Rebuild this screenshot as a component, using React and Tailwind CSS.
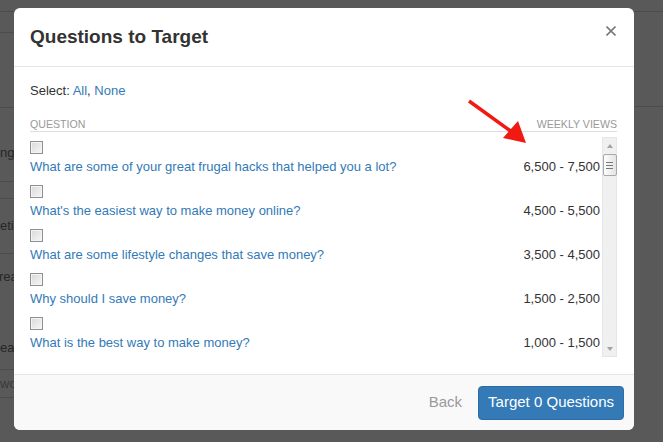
import React from "react";

const questions = [
  { text: "What are some of your great frugal hacks that helped you a lot?", views: "6,500 - 7,500" },
  { text: "What's the easiest way to make money online?", views: "4,500 - 5,500" },
  { text: "What are some lifestyle changes that save money?", views: "3,500 - 4,500" },
  { text: "Why should I save money?", views: "1,500 - 2,500" },
  { text: "What is the best way to make money?", views: "1,000 - 1,500" },
];

// the dimmed page behind the modal, only its left edge shows
const BackdropPage = () => (
  <div className="flex flex-col w-full h-full text-[13px] text-[#262626]">
    <div className="h-[12px] border-b border-[#4c4c4c] shrink-0" />
    <div className="flex flex-1">
      <div className="w-[40px] flex flex-col">
        <div className="h-[21px] border-b border-[#4c4c4c]" />
        <div className="h-[75px] border-b border-[#4c4c4c]" />
        <div className="h-[74px] border-b border-[#4c4c4c] flex items-end pb-[18px]">
          <span className="whitespace-nowrap leading-[20px]">ng</span>
        </div>
        <div className="h-[17px] border-b border-[#4c4c4c]" />
        <div className="h-[55px] border-b border-[#4c4c4c] flex items-center">
          <span className="whitespace-nowrap leading-[20px]">etin</span>
        </div>
        <div className="h-[116px] border-b border-[#4c4c4c] flex flex-col pt-[13px]">
          <span className="whitespace-nowrap leading-[20px] -ml-[1px]">rea</span>
          <span className="whitespace-nowrap leading-[20px] mt-[51px]">ear</span>
        </div>
        <div className="h-[28px] border-b border-[#4c4c4c] flex items-center">
          <span className="whitespace-nowrap leading-[20px] text-[#3a3a3a]">wor</span>
        </div>
      </div>
      <div className="flex-1" />
      <div className="w-[29px] flex flex-col">
        <div className="h-[95px] border-b border-[#4c4c4c]" />
      </div>
    </div>
  </div>
);

const Checkbox = () => (
  <div className="w-[13px] h-[13px] border border-[#8f8f8f] bg-gradient-to-br from-[#d9d9d9] to-[#f6f6f6] shadow-[inset_0_0_0_1px_#f4f4f4]" />
);

const FakeScrollbar = () => (
  <div className="w-[15px] h-full bg-[#f0f0f0] border border-[#e6e6e6] flex flex-col items-center">
    <div className="h-[16px] flex items-center justify-center">
      <div className="w-0 h-0 border-l-[3.5px] border-r-[3.5px] border-b-[4px] border-l-transparent border-r-transparent border-b-[#a3a3a3]" />
    </div>
    <div className="w-[14px] h-[22px] border border-[#a9a9a9] rounded-[2px] bg-gradient-to-r from-[#fdfdfd] to-[#e4e4e4] flex flex-col items-center justify-center gap-[2px]">
      <div className="w-[7px] h-px bg-[#777]" />
      <div className="w-[7px] h-px bg-[#777]" />
      <div className="w-[7px] h-px bg-[#777]" />
    </div>
    <div className="flex-1" />
    <div className="h-[14px] flex items-center justify-center">
      <div className="w-0 h-0 border-l-[3.5px] border-r-[3.5px] border-t-[4px] border-l-transparent border-r-transparent border-t-[#a3a3a3]" />
    </div>
  </div>
);

export default function App() {
  return (
    <div className="relative w-[663px] h-[442px] overflow-hidden bg-[#595959] font-['Liberation_Sans',Arial,sans-serif]">
      <BackdropPage />

      {/* Modal */}
      <div className="absolute left-[14px] top-[8px] w-[620px] h-[422px] bg-white rounded-[6px] flex flex-col overflow-hidden">
        {/* Header */}
        <div className="flex items-start justify-between pl-4 pr-[18px] pt-[15px] pb-[15px] border-b border-[#e5e5e5]">
          <h4 className="text-[19px] leading-[28px] font-bold text-[#333]">Questions to Target</h4>
          <button className="mt-[3px] w-[10px] h-[10px] flex items-center justify-center">
            <svg width="10" height="10" viewBox="0 0 10 10">
              <path d="M0.5 0.5 L9.5 9.5 M9.5 0.5 L0.5 9.5" stroke="#7a7a7a" strokeWidth="1.6" />
            </svg>
          </button>
        </div>

        {/* Body */}
        <div className="flex-1 pl-4 pr-[17px] pt-[15px] pb-[17px] flex flex-col">
          <div className="text-[13px] leading-[18px] text-[#333]">
            Select: <a className="text-[#337ab7]">All</a>, <a className="text-[#337ab7]">None</a>
          </div>

          <div className="mt-[17px] flex justify-between text-[10.6px] leading-[14px] text-[#999] border-b border-[#dddddd]">
            <span>QUESTION</span>
            <span>WEEKLY VIEWS</span>
          </div>

          <div className="mt-[5px] h-[220px] flex">
            <div className="flex-1 pr-[2px] overflow-hidden">
              {questions.map((q) => (
                <div key={q.text} className="pt-[4px] pb-[4px]">
                  <Checkbox />
                  <div className="mt-[3px] flex justify-between text-[13px] leading-[20px]">
                    <a className="text-[#337ab7]">{q.text}</a>
                    <span className="text-[#333]">{q.views}</span>
                  </div>
                </div>
              ))}
            </div>
            <FakeScrollbar />
          </div>
        </div>

        {/* Footer */}
        <div className="h-[56px] border-t border-[#e5e5e5] bg-[#f9f9f9] flex items-center justify-end pr-[10px]">
          <button className="text-[15px] text-[#999] mr-[16px]">Back</button>
          <button className="h-[34px] px-[9px] rounded-[4px] bg-[#337ab7] border border-[#2e6da4] text-white text-[15px]">
            Target 0 Questions
          </button>
        </div>
      </div>

      {/* annotation arrow */}
      <svg className="absolute left-0 top-0 pointer-events-none" width="663" height="442">
        <line x1="469" y1="101" x2="512" y2="132" stroke="#f01a12" strokeWidth="3.5" />
        <polygon points="526,143 503,138 518,121" fill="#f01a12" />
      </svg>
    </div>
  );
}
